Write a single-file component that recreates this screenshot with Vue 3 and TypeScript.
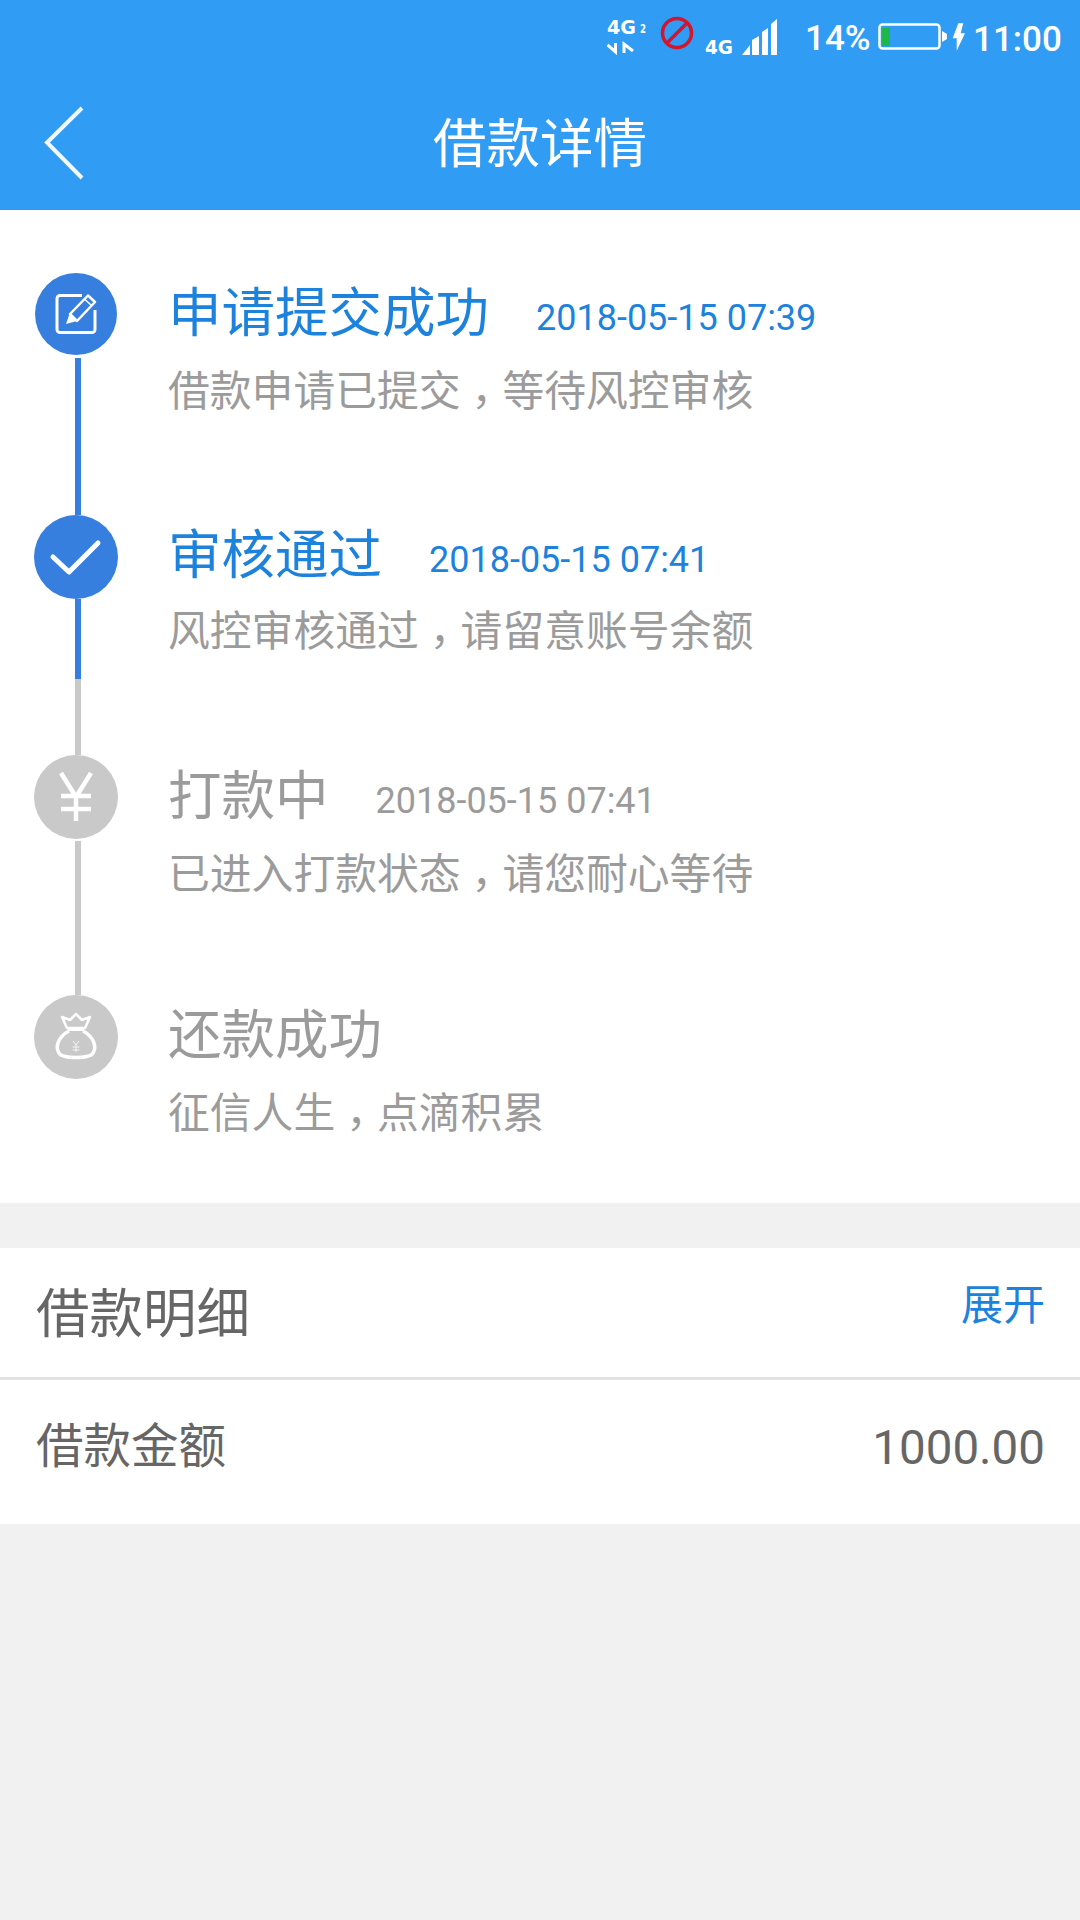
<script setup lang="ts">
interface Step {
  title: string
  time?: string
  desc: [string, string]
  icon: 'edit' | 'check' | 'yen' | 'bag'
  active: boolean
}

const steps: Step[] = [
  { title: '申请提交成功', time: '2018-05-15 07:39', desc: ['借款申请已提交', '等待风控审核'], icon: 'edit', active: true },
  { title: '审核通过', time: '2018-05-15 07:41', desc: ['风控审核通过', '请留意账号余额'], icon: 'check', active: true },
  { title: '打款中', time: '2018-05-15 07:41', desc: ['已进入打款状态', '请您耐心等待'], icon: 'yen', active: false },
  { title: '还款成功', desc: ['征信人生', '点滴积累'], icon: 'bag', active: false },
]
</script>

<template>
  <div class="page">
    <header class="header">
      <div class="status">
        <svg class="net" width="171" height="50" viewBox="0 -10 171 50">
          <text x="0" y="14" class="net-big" textLength="29" lengthAdjust="spacingAndGlyphs">4G</text>
          <text x="33" y="13" class="net-small" textLength="6" lengthAdjust="spacingAndGlyphs">2</text>
          <path d="M0.500 25L8.500 32V23M17 33V24L26 31" fill="none" stroke="#fff" stroke-width="3" />
          <circle cx="70" cy="13" r="14.500" fill="none" stroke="#d5152c" stroke-width="3.500" />
          <path d="M60 23L80 3" stroke="#d5152c" stroke-width="3.500" />
          <text x="98" y="34" class="net-big" textLength="28" lengthAdjust="spacingAndGlyphs">4G</text>
          <path d="M135 35l8-10v10zM145 35V20l7-4v19zM155 35V12l6-4v27zM164 35V4l6-5v36z" fill="#fff" />
        </svg>
        <span class="pct">14%</span>
        <svg class="battery" width="88" height="30" viewBox="0 0 88 30">
          <rect x="1.500" y="1.500" width="60" height="24" rx="3" fill="none" stroke="#fff" stroke-width="2.500" />
          <rect x="4" y="5" width="8" height="18" fill="#1cb84e" />
          <path d="M64 8l5 3v5l-5 3z" fill="#fff" />
          <path d="M80.300.3L74.700 15.300H78.700V27.700L87 10.300H82.700L85.300.3z" fill="#fff" />
        </svg>
        <span class="clock">11:00</span>
      </div>
      <div class="nav">
        <svg class="back" width="44" height="76" viewBox="0 0 44 76">
          <path d="M39 3L4 37.500L39 73" fill="none" stroke="#f2f9ff" stroke-width="4" />
        </svg>
        <h1 class="nav-title">借款详情</h1>
      </div>
    </header>

    <section class="timeline">
      <div v-for="(s, i) in steps" :key="s.title" class="step" :class="`step-${i + 1}`">
        <div class="axis">
          <div class="dot" :class="{ on: s.active }">
            <svg v-if="s.icon === 'edit'" viewBox="0 0 82 82" width="100%" height="100%">
              <path d="M47 22.500H25a3 3 0 0 0-3 3v31a3 3 0 0 0 3 3h32a3 3 0 0 0 3-3V37" fill="none" stroke="#fff" stroke-width="3" />
              <path d="M35 41L53 22.500l7 6.500-18 19z" fill="none" stroke="#fff" stroke-width="2.500" stroke-linejoin="round" />
              <path d="M49.500 26l7 6.500" stroke="#fff" stroke-width="1.500" />
              <path d="M34.500 41l7.500 7-11 3z" fill="#fff" />
            </svg>
            <svg v-else-if="s.icon === 'check'" viewBox="0 0 84 84" width="100%" height="100%">
              <path d="M19 42l16 15 29-29" fill="none" stroke="#fff" stroke-width="5" stroke-linecap="round" stroke-linejoin="round" />
            </svg>
            <svg v-else-if="s.icon === 'yen'" viewBox="0 0 84 84" width="100%" height="100%">
              <path d="M27 18l15 24 15-24M42 42v24M27 41h30M27 54h30" fill="none" stroke="#fff" stroke-width="4.500" />
            </svg>
            <svg v-else viewBox="0 0 84 84" width="100%" height="100%">
              <path d="M33 33L28 22l8 3 6-6 6 6 8-3-5 11z" fill="none" stroke="#fff" stroke-width="2.500" stroke-linejoin="round" />
              <path d="M34 34.500h16" stroke="#fff" stroke-width="3" />
              <path d="M35 36C24 42 21 52 25 58c3 6 31 6 34 0 4-6 1-16-10-22" fill="none" stroke="#fff" stroke-width="3.500" />
              <path d="M39 46l3 4 3-4M42 50v7M38.500 52h7M38.500 55h7" fill="none" stroke="#fff" stroke-width="1" opacity="0.8" />
            </svg>
          </div>
          <div v-if="i < steps.length - 1" class="line" :class="{ on: i === 0 }">
            <span v-if="i === 1" class="line-part"></span>
          </div>
        </div>
        <div class="body">
          <div class="head">
            <span class="title" :class="{ on: s.active }">{{ s.title }}</span>
            <span v-if="s.time" class="time" :class="{ on: s.active }">{{ s.time }}</span>
          </div>
          <p class="desc">{{ s.desc[0] }}<span class="comma">，</span>{{ s.desc[1] }}</p>
        </div>
      </div>
    </section>

    <section class="detail">
      <div class="detail-head">
        <span class="detail-title">借款明细</span>
        <span class="toggle">展开</span>
      </div>
      <div class="detail-row">
        <span class="label">借款金额</span>
        <span class="amount">1000.00</span>
      </div>
    </section>
  </div>
</template>

<style>
html,
body {
  margin: 0;
  background: #f1f1f1;
}
</style>

<style scoped>
.page {
  width: 1080px;
  min-height: 1920px;
  background: #f1f1f1;
  font-family: Roboto, "Noto Sans CJK SC", sans-serif;
}

.header {
  height: 210px;
  background: #309cf3;
  color: #fff;
  display: flex;
  flex-direction: column;
}

.status {
  height: 76px;
  display: flex;
  align-items: flex-start;
  padding-left: 607px;
  box-sizing: border-box;
}

.net {
  margin-top: 10px;
  flex: none;
}

.net-big {
  font: 700 19px "DejaVu Sans", sans-serif;
  fill: #fff;
}

.net-small {
  font: 700 12px "DejaVu Sans", sans-serif;
  fill: #fff;
}

.pct {
  width: 71px;
  margin-left: 27px;
  margin-top: 19px;
  font-size: 35px;
  line-height: 40px;
  font-weight: 500;
}

.battery {
  margin-left: 2px;
  margin-top: 23px;
  flex: none;
}

.clock {
  margin-left: 7px;
  margin-top: 20px;
  font-size: 35px;
  line-height: 40px;
  font-weight: 500;
}

.nav {
  flex: 1;
  position: relative;
  display: flex;
  align-items: center;
  justify-content: center;
  padding-top: 4px;
}

.back {
  position: absolute;
  left: 43px;
  top: 29px;
}

.nav-title {
  margin: 0;
  font-size: 53.500px;
  line-height: 70px;
  font-weight: 400;
}

.timeline {
  height: 993px;
  box-sizing: border-box;
  padding: 63px 0 0 34px;
  background: #fff;
}

.step {
  height: 240px;
  display: flex;
}

.step-1 {
  height: 242px;
}

.step-4 {
  height: 208px;
}

.axis {
  width: 84px;
  flex: none;
  display: flex;
  flex-direction: column;
  align-items: center;
}

.dot {
  width: 84px;
  height: 84px;
  flex: none;
  border-radius: 50%;
  background: #c9c9c9;
}

.dot.on {
  background: #377fdf;
}

.step-1 .dot {
  width: 82px;
  height: 82px;
}

.line {
  flex: 1;
  width: 6px;
  margin-left: 4px;
  background: #c9c9c9;
}

.line.on {
  background: #377fdf;
  margin-top: 3px;
}

.step-3 .line {
  margin-top: 2px;
}

.line-part {
  display: block;
  width: 100%;
  height: 80px;
  background: #377fdf;
}

.body {
  margin-left: 50px;
  padding-top: 11px;
}

.step-3 .body {
  padding-top: 12px;
}

.head {
  display: flex;
  align-items: center;
  height: 60px;
  gap: 47px;
}

.title {
  font-size: 53.500px;
  line-height: 60px;
  color: #9b9b9b;
}

.title.on {
  color: #1d82dc;
}

.time {
  padding-top: 8px;
  font-size: 36px;
  line-height: 60px;
  color: #9b9b9b;
}

.time.on {
  color: #1d82dc;
}

.desc {
  margin: 19px 0 0;
  font-size: 41.800px;
  line-height: 50px;
  color: #9b9b9b;
}

.step-2 .desc {
  margin-top: 17px;
}

.comma {
  position: relative;
  top: 11px;
  font-family: "Noto Sans CJK TC", sans-serif;
}

.detail {
  margin-top: 45px;
  background: #fff;
  color: #666;
}

.detail-head {
  height: 132px;
  box-sizing: border-box;
  padding: 0 35px 0 36px;
  border-bottom: 3px solid #e2e2e2;
  display: flex;
  justify-content: space-between;
  align-items: flex-start;
}

.detail-title {
  margin-top: 32px;
  font-size: 53.500px;
  line-height: 70px;
}

.toggle {
  margin-top: 28px;
  font-size: 42px;
  line-height: 60px;
  color: #1d82dc;
}

.detail-row {
  height: 144px;
  box-sizing: border-box;
  padding: 0 35px 0 36px;
  display: flex;
  justify-content: space-between;
  align-items: flex-start;
  font-size: 47.500px;
  line-height: 60px;
}

.label {
  margin-top: 37px;
}

.amount {
  margin-top: 38px;
}
</style>
